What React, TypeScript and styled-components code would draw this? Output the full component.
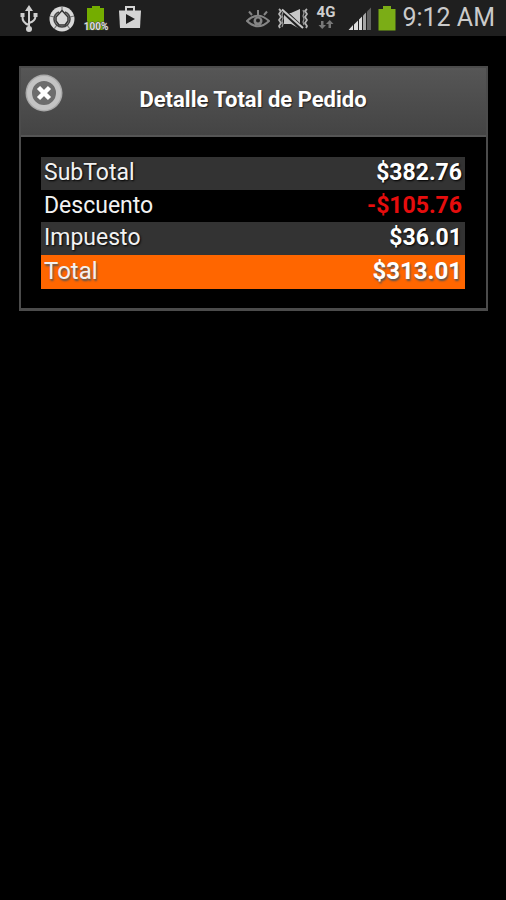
import React from 'react';
import styled, { createGlobalStyle, css } from 'styled-components';

const GlobalStyle = createGlobalStyle`
  * {
    box-sizing: border-box;
  }
  body {
    margin: 0;
    min-height: 100vh;
    background: #000;
    color: #f2f2f2;
    font-family: Roboto, 'Liberation Sans', sans-serif;
  }
`;

const StatusBar = styled.header`
  display: flex;
  align-items: center;
  justify-content: space-between;
  height: 36px;
  padding: 0 11px 0 20px;
  background: #1f1f1f;
`;

const IconGroup = styled.div<{ $gap: number }>`
  display: flex;
  align-items: center;
  gap: ${({ $gap }) => $gap}px;
`;

const Glyph = styled.svg`
  display: block;
  flex: none;
`;

const Clock = styled.time`
  color: #cacaca;
  font-size: 25px;
  line-height: 38px;
  white-space: nowrap;
`;

const Panel = styled.section`
  margin: 30px 18px 0 19px;
  border: 2px solid #4b4b4b;
  border-bottom-width: 3px;
`;

const PanelHeader = styled.div`
  display: grid;
  grid-template-columns: 38px 1fr 38px;
  align-items: center;
  height: 69px;
  padding: 0 5px 4px 4px;
  border-bottom: 2px solid #555;
  background: linear-gradient(#565656, #444);
`;

const CloseButton = styled.button`
  align-self: start;
  width: 38px;
  height: 38px;
  margin-top: 6px;
  padding: 0;
  border: 0;
  border-radius: 50%;
  background: none;
  cursor: pointer;
`;

const Title = styled.h1`
  margin: 0;
  color: #fff;
  font-size: 22px;
  font-weight: 700;
  line-height: 28px;
  text-align: center;
  text-shadow: 1px 1px 1px #222;
`;

const PanelBody = styled.div`
  padding: 20px 21px 19px 20px;
`;

const Totals = styled.table`
  width: 100%;
  border-collapse: collapse;
`;

type RowKind = 'shaded' | 'plain' | 'total';

const Row = styled.tr<{ $kind: RowKind }>`
  height: 32px;
  font-size: 23px;
  line-height: 32px;
  text-shadow: 1px 1px 2px #000;
  ${({ $kind }) =>
    $kind === 'shaded' &&
    css`
      height: 33px;
      background: #333;
    `}
  ${({ $kind }) =>
    $kind === 'total' &&
    css`
      height: 34px;
      background: #f60;
      font-size: 24px;
      text-shadow: 1px 2px 2px #555;
    `}
`;

const Label = styled.th`
  padding: 0 3px;
  font-weight: 400;
  text-align: left;
  vertical-align: top;
`;

const Amount = styled.td<{ $negative: boolean }>`
  padding: 0 3px;
  color: ${({ $negative }) => ($negative ? '#e60d0d' : '#fff')};
  font-weight: 700;
  text-align: right;
  vertical-align: top;
`;

const rows: { label: string; amount: string; kind: RowKind }[] = [
  { label: 'SubTotal', amount: '$382.76', kind: 'shaded' },
  { label: 'Descuento', amount: '-$105.76', kind: 'plain' },
  { label: 'Impuesto', amount: '$36.01', kind: 'shaded' },
  { label: 'Total', amount: '$313.01', kind: 'total' },
];

const UsbIcon = () => (
  <Glyph width="18" height="36" viewBox="0 0 18 36" fill="none" stroke="#cfcfcf" strokeWidth="2" aria-hidden="true">
    <path d="M9 10V28M9 25Q2 23 2.500 16M9 23Q15.500 21 15.500 16" />
    <path d="M9 5l4 6H5zM0.500 13h4v4h-4zM13.500 13h4v4h-4z" fill="#cfcfcf" stroke="none" />
    <circle cx="9" cy="29" r="3" fill="#cfcfcf" stroke="none" />
  </Glyph>
);

const RingIcon = () => (
  <Glyph width="26" height="36" viewBox="0 0 26 36" aria-hidden="true">
    <circle cx="13" cy="19" r="12.500" fill="#d8d8d8" />
    <path d="M13 6.500v4M1 16l4 1M25 16l-4 1M5 29l3-4M21 29l-3-4" stroke="#777" strokeWidth="1.200" />
    <path d="M10 12a8 8 0 0 0-5 7 8 8 0 0 0 16 0 8 8 0 0 0-5-7" fill="none" stroke="#444" strokeWidth="1.600" />
    <path d="M13 10.500L19 17v4l-3 4h-6l-3-4v-4z" fill="#d8d8d8" stroke="#333" strokeWidth="1.500" />
  </Glyph>
);

const ChargeIcon = () => (
  <Glyph width="26" height="36" viewBox="0 0 26 36" aria-hidden="true">
    <path d="M9 6h8v2h4v22H4V8h5z" fill="#74ad00" />
    <text x="13" y="30" textAnchor="middle" fontFamily="Roboto, sans-serif" fontSize="10" fontWeight="700" fill="#ddd" stroke="#444" strokeWidth="1" paintOrder="stroke">
      100%
    </text>
  </Glyph>
);

const StoreIcon = () => (
  <Glyph width="24" height="36" viewBox="0 0 24 36" aria-hidden="true">
    <path d="M8 11V7h8v4" fill="none" stroke="#d4d4d4" strokeWidth="2" />
    <path d="M1 10.500h22L22 28H2z" fill="#d4d4d4" />
    <path d="M8 14v10l9-5z" fill="#1f1f1f" />
  </Glyph>
);

const EyeIcon = () => (
  <Glyph width="24" height="36" viewBox="0 0 24 36" fill="none" stroke="#858585" strokeWidth="2" aria-hidden="true">
    <path d="M1 21Q12 10.500 23 21Q12 31.500 1 21z" />
    <circle cx="12" cy="21" r="4.500" fill="#858585" stroke="none" />
    <path d="M12 15v-5M6 15l-3-3.500M18 15l3-3.500" />
    <circle cx="12" cy="20.500" r="2" fill="#1f1f1f" stroke="none" />
  </Glyph>
);

const MuteIcon = () => (
  <Glyph width="30" height="36" viewBox="0 0 30 36" aria-hidden="true">
    <path d="M6 13h7l9-4v20l-9-5H6z" fill="#c8c8c8" />
    <path d="M6 11.500l18 17" stroke="#1f1f1f" strokeWidth="5" />
    <path d="M4 9.500l21 18.500" stroke="#c8c8c8" strokeWidth="2" />
    <path d="M1 9l2 2-2 3 2 3-2 3 2 3-2 3 1 2M29 9l-2 2 2 3-2 3 2 3-2 3 2 3-1 2" fill="none" stroke="#b5b5b5" strokeWidth="1.800" />
    <path d="M5 12l-1 3 1 3-1 3 1 3-1 3M25 10l1 3-1 3 1 3-1 3 1 3" fill="none" stroke="#999" strokeWidth="1.200" />
  </Glyph>
);

const NetworkIcon = () => (
  <Glyph width="20" height="36" viewBox="0 0 20 36" aria-hidden="true">
    <text x="10" y="17" textAnchor="middle" fontFamily="Roboto, sans-serif" fontSize="15" fontWeight="700" fill="#cfcfcf">
      4G
    </text>
    <path d="M5 21h2.500v4H10l-3.750 4-3.750-4H5zM12.500 28v-4H10l3.750-4 3.750 4H15v4z" fill="#777" />
  </Glyph>
);

const SignalIcon = () => (
  <Glyph width="24" height="36" viewBox="0 0 24 36" aria-hidden="true">
    <path d="M0.500 30l4.500-5v5zM6 24.500l4-4V30H6zM11 19.500l3-3V30h-3z" fill="#dcdcdc" />
    <path d="M15 15.500l3-3V30h-3z" fill="#a5a5a5" />
    <path d="M19 11.500l4-4V30h-4z" fill="#606060" />
  </Glyph>
);

const BatteryIcon = () => (
  <Glyph width="18" height="36" viewBox="0 0 18 36" aria-hidden="true">
    <path d="M5 6h8v3h4.500v21.500h-17V9H5z" fill="#7bad16" />
  </Glyph>
);

const CloseIcon = () => (
  <Glyph width="38" height="38" viewBox="0 0 38 38" aria-hidden="true">
    <circle cx="19" cy="19" r="18.500" fill="#aaa" />
    <circle cx="19" cy="19" r="14.500" fill="#6d6d6d" stroke="#c4c4c4" strokeWidth="5" />
    <path d="M13.500 13.500l11 11M24.500 13.500l-11 11" stroke="#fff" strokeWidth="4.500" />
  </Glyph>
);

export default function App() {
  return (
    <>
      <GlobalStyle />
      <StatusBar>
        <IconGroup $gap={8}>
          <IconGroup $gap={11}>
            <UsbIcon />
            <RingIcon />
          </IconGroup>
          <IconGroup $gap={9}>
            <ChargeIcon />
            <StoreIcon />
          </IconGroup>
        </IconGroup>
        <IconGroup $gap={12}>
          <IconGroup $gap={8}>
            <EyeIcon />
            <MuteIcon />
            <NetworkIcon />
          </IconGroup>
          <IconGroup $gap={6}>
            <SignalIcon />
            <BatteryIcon />
            <Clock dateTime="09:12">9:12 AM</Clock>
          </IconGroup>
        </IconGroup>
      </StatusBar>
      <main>
        <Panel aria-labelledby="panel-title">
          <PanelHeader>
            <CloseButton type="button" aria-label="Cerrar">
              <CloseIcon />
            </CloseButton>
            <Title id="panel-title">Detalle Total de Pedido</Title>
          </PanelHeader>
          <PanelBody>
            <Totals>
              <tbody>
                {rows.map(({ label, amount, kind }) => (
                  <Row key={label} $kind={kind}>
                    <Label scope="row">{label}</Label>
                    <Amount $negative={amount.startsWith('-')}>{amount}</Amount>
                  </Row>
                ))}
              </tbody>
            </Totals>
          </PanelBody>
        </Panel>
      </main>
    </>
  );
}
